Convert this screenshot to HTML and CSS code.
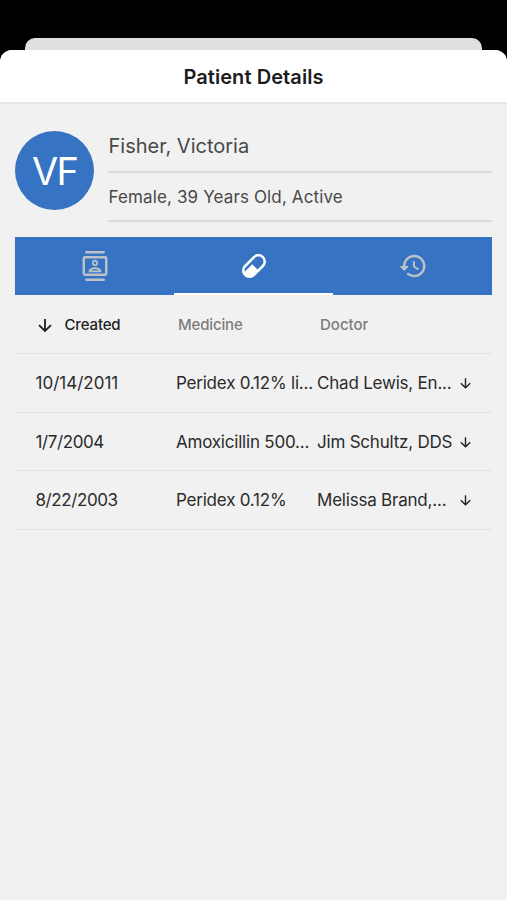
FILE: index.html
```html
<!DOCTYPE html>
<html lang="en">
<head>
<meta charset="utf-8">
<title>Patient Details</title>
<link rel="stylesheet" href="styles.css">
</head>
<body>
<svg width="0" height="0" class="defs"><symbol id="down" viewBox="0 0 14 14"><path d="M7 1V13M1 7.2L7 13L13 7.2"/></symbol></svg>
<div class="backdrop"></div>
<main class="sheet">
  <header class="title"><h1>Patient Details</h1></header>
  <section class="patient">
    <div class="avatar"><span>VF</span></div>
    <div class="info">
      <div class="name"><span>Fisher, Victoria</span></div>
      <div class="meta"><span>Female, 39 Years Old, Active</span></div>
    </div>
  </section>
  <nav class="tabs">
    <div class="tab">
      <svg viewBox="0 0 24 24"><g fill="none" stroke="currentColor" stroke-width="1.9" stroke-linecap="round"><path d="M5 1H19M5 23H19"/><rect x="3" y="5" width="18" height="14" rx="1"/></g><path fill="currentColor" fill-rule="evenodd" d="M12 12c1.38 0 2.5-1.12 2.5-2.5S13.38 7 12 7 9.500 8.120 9.500 9.500 10.620 12 12 12zm0-3.500c.55 0 1 .45 1 1s-.45 1-1 1-1-.45-1-1 .45-1 1-1zm5 7.490C17 13.900 13.690 13 12 13s-5 .9-5 2.990V17h10v-1.010zm-8.190-.49c.61-.52 2.030-1 3.190-1 1.170 0 2.590.48 3.200 1H8.810z"/></svg>
    </div>
    <div class="tab active">
      <svg viewBox="0 0 24 24"><path fill="currentColor" d="M4.220,11.290L11.290,4.220C13.640,1.880 17.430,1.880 19.780,4.220C22.120,6.560 22.120,10.360 19.780,12.710L12.710,19.780C10.360,22.120 6.560,22.120 4.220,19.780C1.880,17.430 1.880,13.640 4.220,11.290M5.640,12.710C4.590,13.750 4.240,15.240 4.600,16.570L10.590,10.590L14.830,14.830L18.360,11.290C19.930,9.730 19.930,7.200 18.360,5.640C16.800,4.070 14.270,4.070 12.710,5.640L5.640,12.710Z"/></svg>
    </div>
    <div class="tab">
      <svg viewBox="0 0 24 24"><path fill="currentColor" d="M13.260 3C8.170 2.860 4 6.950 4 12H2.210c-.45 0-.67.54-.35.85l2.790 2.800c.2.2.51.2.71 0l2.790-2.800c.31-.31.09-.85-.36-.85H6c0-3.900 3.180-7.050 7.100-7 3.720.05 6.850 3.180 6.900 6.900.05 3.910-3.100 7.100-7 7.100-1.610 0-3.100-.55-4.280-1.480-.4-.31-.96-.28-1.320.08-.42.42-.39 1.130.08 1.490C9 20.290 10.910 21 13 21c5.050 0 9.140-4.170 9-9.260-.13-4.690-4.050-8.610-8.740-8.740zm-.51 5c-.41 0-.75.34-.75.75v3.680c0 .35.19.68.49.86l3.120 1.850c.36.21.82.09 1.030-.26.21-.36.09-.82-.26-1.030l-2.880-1.710v-3.400c0-.4-.34-.74-.75-.74z"/></svg>
    </div>
  </nav>
  <section class="table">
    <div class="row head">
      <div class="sorted"><svg class="sort"><use href="#down"/></svg><span>Created</span></div>
      <div><span>Medicine</span></div>
      <div><span>Doctor</span></div>
    </div>
    <div class="row">
      <div><span class="wide">10/14/2011</span></div><div><span>Peridex 0.12% li...</span></div><div><span>Chad Lewis, En...</span></div><svg class="more"><use href="#down"/></svg>
    </div>
    <div class="row">
      <div><span class="tight">1/7/2004</span></div><div><span>Amoxicillin 500...</span></div><div><span>Jim Schultz, DDS</span></div><svg class="more"><use href="#down"/></svg>
    </div>
    <div class="row">
      <div><span class="tight">8/22/2003</span></div><div><span>Peridex 0.12%</span></div><div><span>Melissa Brand,...</span></div><svg class="more"><use href="#down"/></svg>
    </div>
  </section>
</main>
</body>
</html>
```
FILE: styles.css
```css
* { box-sizing: border-box; }
body {
  margin: 0;
  height: 900px;
  padding-top: 38px;
  background: #000;
  font-family: Inter, "Liberation Sans", sans-serif;
  color: #2b2b2b;
  overflow: hidden;
}
.defs { display: block; height: 0; }
.backdrop {
  height: 12px;
  margin: 0 25px;
  background: #e0e0e0;
  border-radius: 10px 10px 0 0;
}
.sheet {
  height: 850px;
  background: #f1f1f1;
  border-radius: 12px 12px 0 0;
  overflow: hidden;
}
.title {
  height: 54px;
  padding-top: 2px;
  background: #fff;
  border-bottom: 2px solid #e5e5e5;
  display: flex;
  align-items: center;
  justify-content: center;
}
h1 { margin: 0; font-size: 20px; font-weight: 600; letter-spacing: 0.08px; color: #1c1c1c; }
.patient { display: flex; gap: 14px; padding: 15px 15px 0; }
.avatar {
  width: 79px;
  height: 79px;
  margin-top: 12px;
  border-radius: 50%;
  background: #3673c3;
  color: #fff;
  font-size: 38px;
  font-weight: 400;
  letter-spacing: -1.8px;
  display: flex;
  align-items: center;
  justify-content: center;
}
.info { flex: 1; }
.name, .meta {
  display: flex;
  align-items: center;
  padding-left: 0.5px;
  border-bottom: 2px solid #dadada;
  color: #484848;
  white-space: nowrap;
}
.name { height: 54px; padding-top: 2px; font-size: 20px; }
.meta { height: 49px; padding-top: 1px; font-size: 17px; letter-spacing: 0.13px; }
.tabs { display: flex; height: 58px; margin: 15px 15px 0; background: #3673c3; }
.tab {
  flex: 1;
  display: flex;
  align-items: center;
  justify-content: center;
  color: #bdc2c8;
  border-bottom: 2px solid transparent;
  padding-top: 2px;
}
.tab svg { width: 30px; height: 30px; }
.tab.active { color: #fff; border-color: #fff; }
.table { margin: 0 15px; }
.row {
  height: 58.8px;
  display: grid;
  grid-template-columns: 141px 141px 143px 12px;
  align-items: center;
  padding: 0.4px 0 0 20px;
  border-bottom: 1px solid #e2e2e2;
  font-size: 17px;
  letter-spacing: -0.21px;
  white-space: nowrap;
}
.row + .row > div:first-child { padding-left: 0.5px; }
.wide { letter-spacing: 0; }
.tight { letter-spacing: -0.4px; }
.head { grid-template-columns: 143px 142px 1fr; padding-top: 2px; font-size: 15px; font-weight: 500; letter-spacing: -0.15px; color: #7d7d7d; }
.head > :last-child { letter-spacing: 0; }
.sorted { display: flex; align-items: center; gap: 12.5px; padding-left: 3px; color: #222; }
.sort, .more { fill: none; stroke: #222; stroke-width: 1.8; }
.sort { width: 14px; height: 14px; }
.more { width: 11px; height: 12px; }
```
